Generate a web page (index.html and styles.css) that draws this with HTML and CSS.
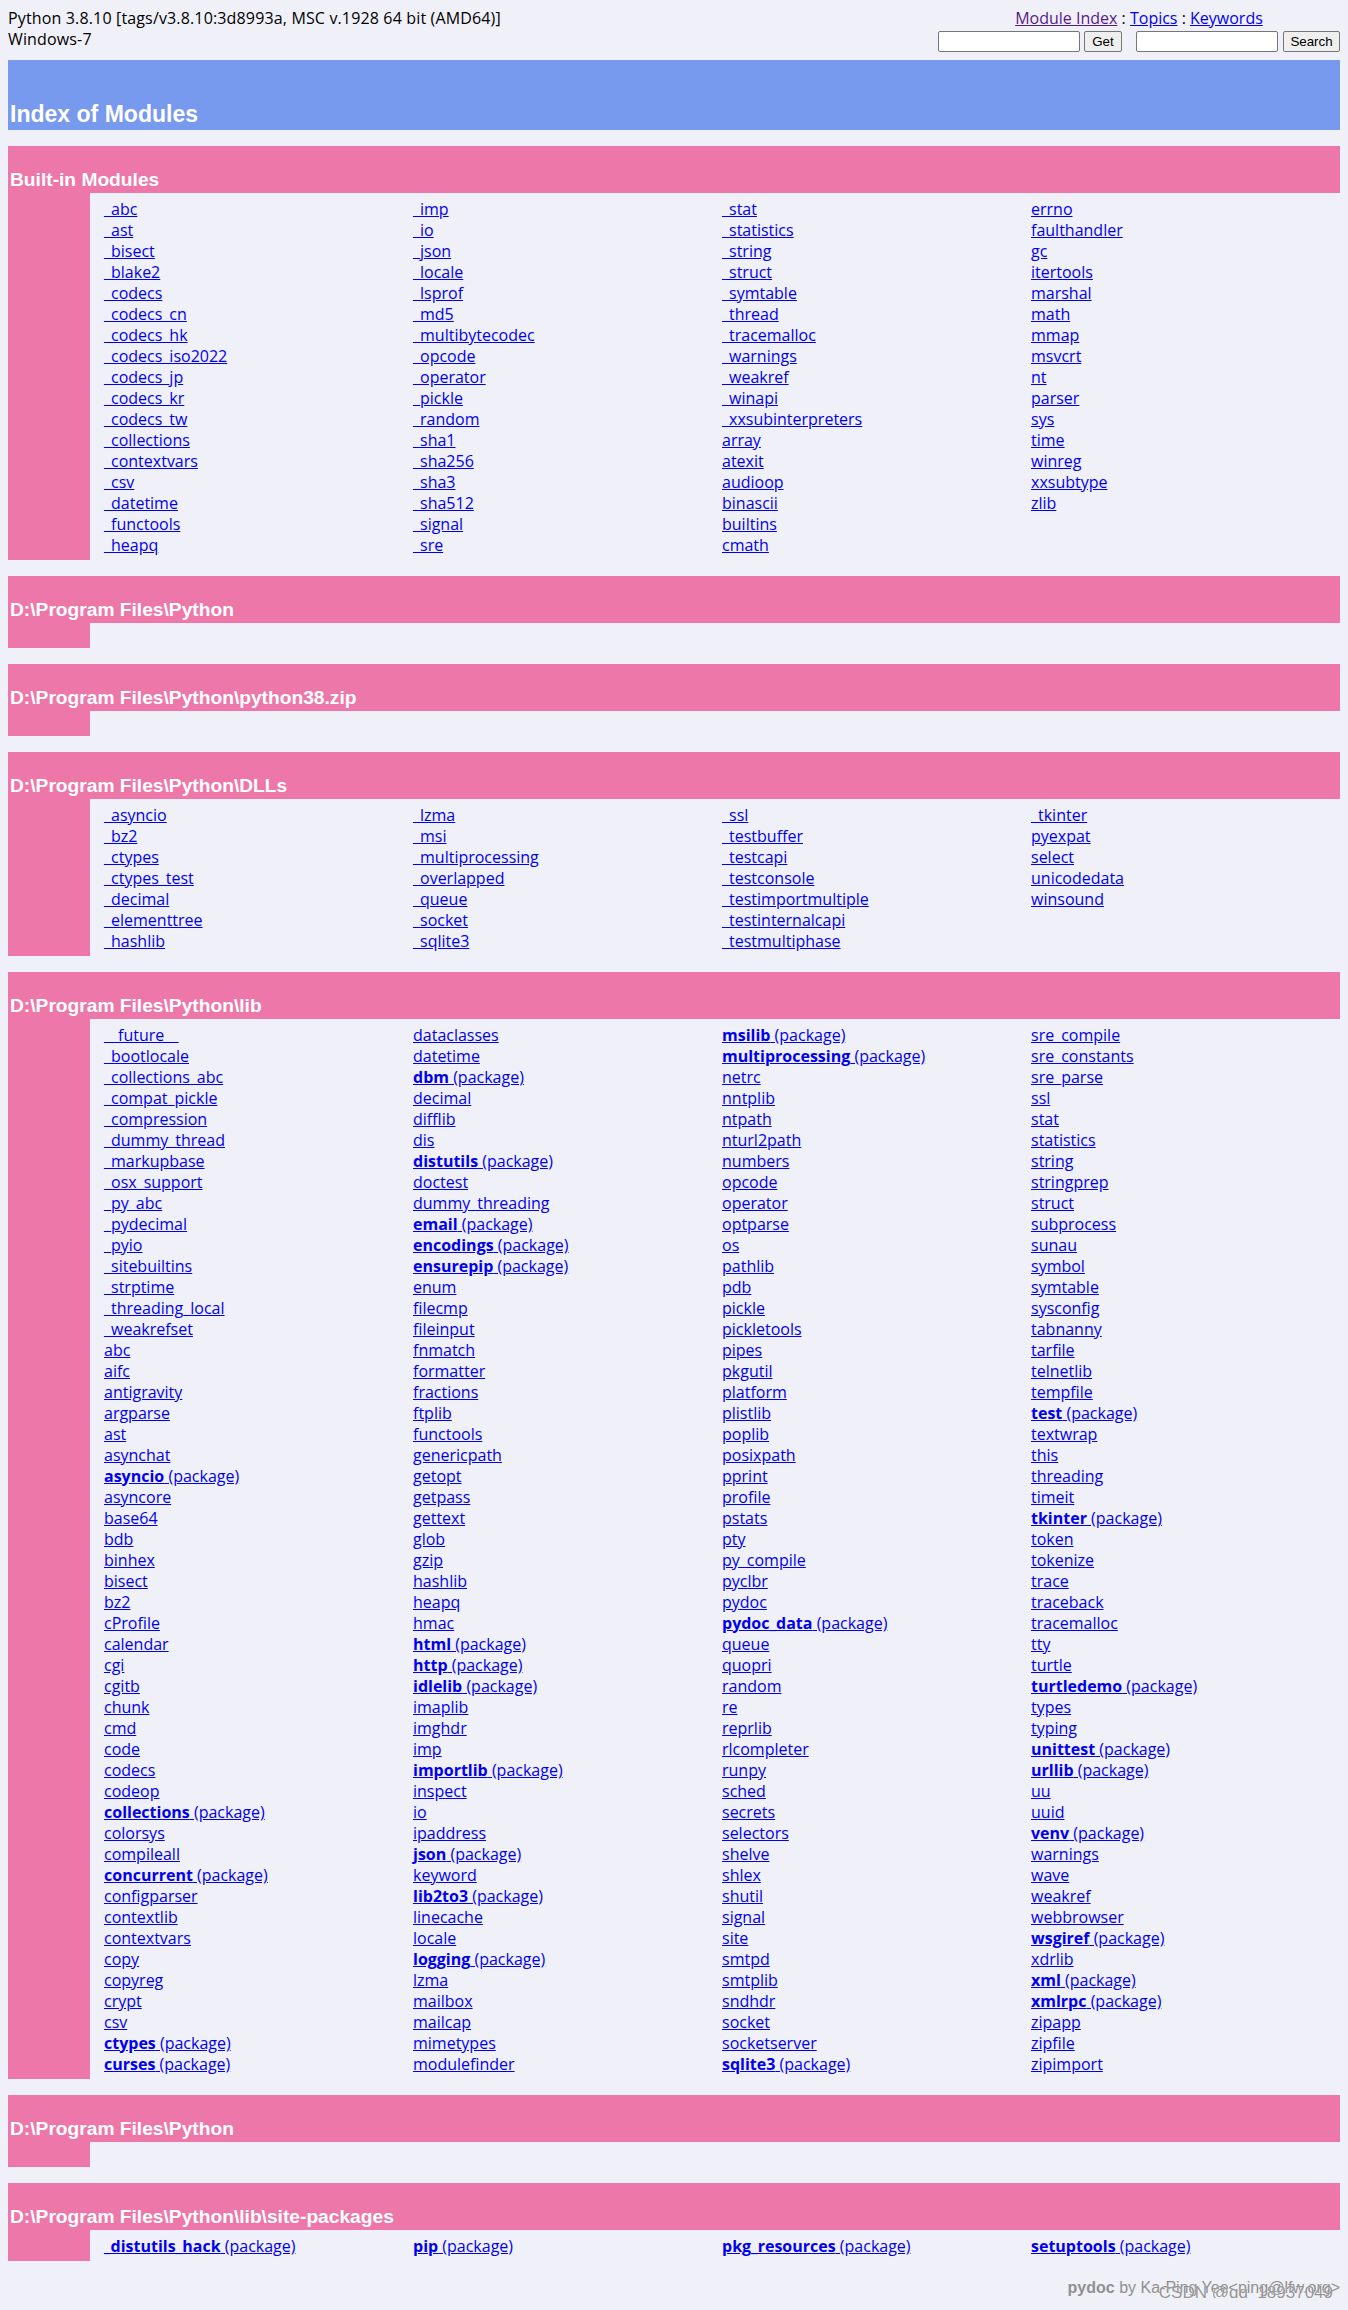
FILE: index.html
```html
<!DOCTYPE html>
<html>
<head>
<meta charset="utf-8">
<title>Pydoc: Index of Modules</title>
<link rel="stylesheet" href="styles.css">
</head>
<body>
<div class="topbar">
  <div class="version">Python 3.8.10 [tags/v3.8.10:3d8993a, MSC v.1928 64 bit (AMD64)]<br>Windows-7</div>
  <div class="nav">
    <div class="navlinks"><a class="visited" href="#">Module Index</a> : <a href="#">Topics</a> : <a href="#">Keywords</a></div>
    <div class="forms">
      <form class="f"><input class="key" type="text"><button class="btn get" type="button">Get</button></form>
      <form class="f f2"><input class="key" type="text"><button class="btn search" type="button">Search</button></form>
    </div>
  </div>
</div>

<div class="banner"><strong>Index of Modules</strong></div>

<div class="section">
  <div class="sec-head"><strong>Built-in Modules</strong></div>
  <div class="sec-body">
    <div class="gutter"></div>
    <div class="list">
      <div class="col">
        <a href="#">_abc</a><a href="#">_ast</a><a href="#">_bisect</a><a href="#">_blake2</a><a href="#">_codecs</a><a href="#">_codecs_cn</a><a href="#">_codecs_hk</a><a href="#">_codecs_iso2022</a><a href="#">_codecs_jp</a><a href="#">_codecs_kr</a><a href="#">_codecs_tw</a><a href="#">_collections</a><a href="#">_contextvars</a><a href="#">_csv</a><a href="#">_datetime</a><a href="#">_functools</a><a href="#">_heapq</a>
      </div>
      <div class="col">
        <a href="#">_imp</a><a href="#">_io</a><a href="#">_json</a><a href="#">_locale</a><a href="#">_lsprof</a><a href="#">_md5</a><a href="#">_multibytecodec</a><a href="#">_opcode</a><a href="#">_operator</a><a href="#">_pickle</a><a href="#">_random</a><a href="#">_sha1</a><a href="#">_sha256</a><a href="#">_sha3</a><a href="#">_sha512</a><a href="#">_signal</a><a href="#">_sre</a>
      </div>
      <div class="col">
        <a href="#">_stat</a><a href="#">_statistics</a><a href="#">_string</a><a href="#">_struct</a><a href="#">_symtable</a><a href="#">_thread</a><a href="#">_tracemalloc</a><a href="#">_warnings</a><a href="#">_weakref</a><a href="#">_winapi</a><a href="#">_xxsubinterpreters</a><a href="#">array</a><a href="#">atexit</a><a href="#">audioop</a><a href="#">binascii</a><a href="#">builtins</a><a href="#">cmath</a>
      </div>
      <div class="col">
        <a href="#">errno</a><a href="#">faulthandler</a><a href="#">gc</a><a href="#">itertools</a><a href="#">marshal</a><a href="#">math</a><a href="#">mmap</a><a href="#">msvcrt</a><a href="#">nt</a><a href="#">parser</a><a href="#">sys</a><a href="#">time</a><a href="#">winreg</a><a href="#">xxsubtype</a><a href="#">zlib</a>
      </div>
    </div>
  </div>
</div>

<div class="section">
  <div class="sec-head"><strong>D:\Program Files\Python</strong></div>
  <div class="sec-body empty"><div class="gutter"></div></div>
</div>

<div class="section">
  <div class="sec-head"><strong>D:\Program Files\Python\python38.zip</strong></div>
  <div class="sec-body empty"><div class="gutter"></div></div>
</div>

<div class="section">
  <div class="sec-head"><strong>D:\Program Files\Python\DLLs</strong></div>
  <div class="sec-body">
    <div class="gutter"></div>
    <div class="list">
      <div class="col">
        <a href="#">_asyncio</a><a href="#">_bz2</a><a href="#">_ctypes</a><a href="#">_ctypes_test</a><a href="#">_decimal</a><a href="#">_elementtree</a><a href="#">_hashlib</a>
      </div>
      <div class="col">
        <a href="#">_lzma</a><a href="#">_msi</a><a href="#">_multiprocessing</a><a href="#">_overlapped</a><a href="#">_queue</a><a href="#">_socket</a><a href="#">_sqlite3</a>
      </div>
      <div class="col">
        <a href="#">_ssl</a><a href="#">_testbuffer</a><a href="#">_testcapi</a><a href="#">_testconsole</a><a href="#">_testimportmultiple</a><a href="#">_testinternalcapi</a><a href="#">_testmultiphase</a>
      </div>
      <div class="col">
        <a href="#">_tkinter</a><a href="#">pyexpat</a><a href="#">select</a><a href="#">unicodedata</a><a href="#">winsound</a>
      </div>
    </div>
  </div>
</div>

<div class="section">
  <div class="sec-head"><strong>D:\Program Files\Python\lib</strong></div>
  <div class="sec-body">
    <div class="gutter"></div>
    <div class="list">
      <div class="col">
        <a href="#">__future__</a><a href="#">_bootlocale</a><a href="#">_collections_abc</a><a href="#">_compat_pickle</a><a href="#">_compression</a><a href="#">_dummy_thread</a><a href="#">_markupbase</a><a href="#">_osx_support</a><a href="#">_py_abc</a><a href="#">_pydecimal</a><a href="#">_pyio</a><a href="#">_sitebuiltins</a><a href="#">_strptime</a><a href="#">_threading_local</a><a href="#">_weakrefset</a><a href="#">abc</a><a href="#">aifc</a><a href="#">antigravity</a><a href="#">argparse</a><a href="#">ast</a><a href="#">asynchat</a><a href="#"><strong>asyncio</strong>&nbsp;(package)</a><a href="#">asyncore</a><a href="#">base64</a><a href="#">bdb</a><a href="#">binhex</a><a href="#">bisect</a><a href="#">bz2</a><a href="#">cProfile</a><a href="#">calendar</a><a href="#">cgi</a><a href="#">cgitb</a><a href="#">chunk</a><a href="#">cmd</a><a href="#">code</a><a href="#">codecs</a><a href="#">codeop</a><a href="#"><strong>collections</strong>&nbsp;(package)</a><a href="#">colorsys</a><a href="#">compileall</a><a href="#"><strong>concurrent</strong>&nbsp;(package)</a><a href="#">configparser</a><a href="#">contextlib</a><a href="#">contextvars</a><a href="#">copy</a><a href="#">copyreg</a><a href="#">crypt</a><a href="#">csv</a><a href="#"><strong>ctypes</strong>&nbsp;(package)</a><a href="#"><strong>curses</strong>&nbsp;(package)</a>
      </div>
      <div class="col">
        <a href="#">dataclasses</a><a href="#">datetime</a><a href="#"><strong>dbm</strong>&nbsp;(package)</a><a href="#">decimal</a><a href="#">difflib</a><a href="#">dis</a><a href="#"><strong>distutils</strong>&nbsp;(package)</a><a href="#">doctest</a><a href="#">dummy_threading</a><a href="#"><strong>email</strong>&nbsp;(package)</a><a href="#"><strong>encodings</strong>&nbsp;(package)</a><a href="#"><strong>ensurepip</strong>&nbsp;(package)</a><a href="#">enum</a><a href="#">filecmp</a><a href="#">fileinput</a><a href="#">fnmatch</a><a href="#">formatter</a><a href="#">fractions</a><a href="#">ftplib</a><a href="#">functools</a><a href="#">genericpath</a><a href="#">getopt</a><a href="#">getpass</a><a href="#">gettext</a><a href="#">glob</a><a href="#">gzip</a><a href="#">hashlib</a><a href="#">heapq</a><a href="#">hmac</a><a href="#"><strong>html</strong>&nbsp;(package)</a><a href="#"><strong>http</strong>&nbsp;(package)</a><a href="#"><strong>idlelib</strong>&nbsp;(package)</a><a href="#">imaplib</a><a href="#">imghdr</a><a href="#">imp</a><a href="#"><strong>importlib</strong>&nbsp;(package)</a><a href="#">inspect</a><a href="#">io</a><a href="#">ipaddress</a><a href="#"><strong>json</strong>&nbsp;(package)</a><a href="#">keyword</a><a href="#"><strong>lib2to3</strong>&nbsp;(package)</a><a href="#">linecache</a><a href="#">locale</a><a href="#"><strong>logging</strong>&nbsp;(package)</a><a href="#">lzma</a><a href="#">mailbox</a><a href="#">mailcap</a><a href="#">mimetypes</a><a href="#">modulefinder</a>
      </div>
      <div class="col">
        <a href="#"><strong>msilib</strong>&nbsp;(package)</a><a href="#"><strong>multiprocessing</strong>&nbsp;(package)</a><a href="#">netrc</a><a href="#">nntplib</a><a href="#">ntpath</a><a href="#">nturl2path</a><a href="#">numbers</a><a href="#">opcode</a><a href="#">operator</a><a href="#">optparse</a><a href="#">os</a><a href="#">pathlib</a><a href="#">pdb</a><a href="#">pickle</a><a href="#">pickletools</a><a href="#">pipes</a><a href="#">pkgutil</a><a href="#">platform</a><a href="#">plistlib</a><a href="#">poplib</a><a href="#">posixpath</a><a href="#">pprint</a><a href="#">profile</a><a href="#">pstats</a><a href="#">pty</a><a href="#">py_compile</a><a href="#">pyclbr</a><a href="#">pydoc</a><a href="#"><strong>pydoc_data</strong>&nbsp;(package)</a><a href="#">queue</a><a href="#">quopri</a><a href="#">random</a><a href="#">re</a><a href="#">reprlib</a><a href="#">rlcompleter</a><a href="#">runpy</a><a href="#">sched</a><a href="#">secrets</a><a href="#">selectors</a><a href="#">shelve</a><a href="#">shlex</a><a href="#">shutil</a><a href="#">signal</a><a href="#">site</a><a href="#">smtpd</a><a href="#">smtplib</a><a href="#">sndhdr</a><a href="#">socket</a><a href="#">socketserver</a><a href="#"><strong>sqlite3</strong>&nbsp;(package)</a>
      </div>
      <div class="col">
        <a href="#">sre_compile</a><a href="#">sre_constants</a><a href="#">sre_parse</a><a href="#">ssl</a><a href="#">stat</a><a href="#">statistics</a><a href="#">string</a><a href="#">stringprep</a><a href="#">struct</a><a href="#">subprocess</a><a href="#">sunau</a><a href="#">symbol</a><a href="#">symtable</a><a href="#">sysconfig</a><a href="#">tabnanny</a><a href="#">tarfile</a><a href="#">telnetlib</a><a href="#">tempfile</a><a href="#"><strong>test</strong>&nbsp;(package)</a><a href="#">textwrap</a><a href="#">this</a><a href="#">threading</a><a href="#">timeit</a><a href="#"><strong>tkinter</strong>&nbsp;(package)</a><a href="#">token</a><a href="#">tokenize</a><a href="#">trace</a><a href="#">traceback</a><a href="#">tracemalloc</a><a href="#">tty</a><a href="#">turtle</a><a href="#"><strong>turtledemo</strong>&nbsp;(package)</a><a href="#">types</a><a href="#">typing</a><a href="#"><strong>unittest</strong>&nbsp;(package)</a><a href="#"><strong>urllib</strong>&nbsp;(package)</a><a href="#">uu</a><a href="#">uuid</a><a href="#"><strong>venv</strong>&nbsp;(package)</a><a href="#">warnings</a><a href="#">wave</a><a href="#">weakref</a><a href="#">webbrowser</a><a href="#"><strong>wsgiref</strong>&nbsp;(package)</a><a href="#">xdrlib</a><a href="#"><strong>xml</strong>&nbsp;(package)</a><a href="#"><strong>xmlrpc</strong>&nbsp;(package)</a><a href="#">zipapp</a><a href="#">zipfile</a><a href="#">zipimport</a>
      </div>
    </div>
  </div>
</div>

<div class="section">
  <div class="sec-head"><strong>D:\Program Files\Python</strong></div>
  <div class="sec-body empty"><div class="gutter"></div></div>
</div>

<div class="section">
  <div class="sec-head"><strong>D:\Program Files\Python\lib\site-packages</strong></div>
  <div class="sec-body">
    <div class="gutter"></div>
    <div class="list">
      <div class="col"><a href="#"><strong>_distutils_hack</strong>&nbsp;(package)</a></div>
      <div class="col"><a href="#"><strong>pip</strong>&nbsp;(package)</a></div>
      <div class="col"><a href="#"><strong>pkg_resources</strong>&nbsp;(package)</a></div>
      <div class="col"><a href="#"><strong>setuptools</strong>&nbsp;(package)</a></div>
    </div>
  </div>
</div>

<div class="footer"><strong>pydoc</strong> by Ka-Ping Yee&lt;ping@lfw.org&gt;<span class="watermark">CSDN @qq_18937049</span></div>
</body>
</html>
```

FILE: styles.css
```css
* {
  box-sizing: border-box;
}

html {
  background: #f0f0f8;
}

body {
  margin: 8px;
  font-family: "Open Sans", "Noto Sans CJK SC", sans-serif;
  font-size: 16px;
  line-height: 21px;
  color: #000;
}

a {
  color: #0000ee;
  text-decoration: underline;
}

a.visited {
  color: #551a8b;
}

/* top bar */
.topbar {
  display: flex;
  justify-content: space-between;
  height: 52px;
}

.version {
  letter-spacing: 0.15px;
}

.nav {
  width: 402px;
}

.navlinks {
  text-align: center;
}

.forms {
  display: flex;
  margin-top: 2px;
}

.f {
  display: flex;
  margin: 0;
}

.f2 {
  margin-left: 14px;
}

.key {
  width: 142px;
  height: 21px;
  margin: 0;
  padding: 1px 2px;
  border: 1px solid #767676;
  border-radius: 2px;
  background: #fff;
  font: 13.33px "Liberation Sans", Arial, sans-serif;
}

.btn {
  height: 21px;
  margin: 0 0 0 4px;
  padding: 0;
  border: 1px solid #767676;
  border-radius: 2px;
  background: #efefef;
  color: #000;
  font: 13.33px "Liberation Sans", Arial, sans-serif;
}

.get {
  width: 38px;
}

.search {
  width: 57px;
  margin-left: 5px;
}

/* banner */
.banner {
  display: flex;
  align-items: flex-end;
  height: 70px;
  padding: 0 2px 3px;
  background: #7799ee;
  color: #fff;
  font: bold 23.04px/26px "Liberation Sans", Arial, sans-serif;
}

/* sections */
.section {
  margin-top: 16px;
}

.section + .section {
  margin-top: 16.3px;
}

.sec-head {
  display: flex;
  align-items: flex-end;
  height: 46.7px;
  padding: 0 2px 2px;
  background: #ee77aa;
  color: #fff;
  font: bold 19.2px/22px "Liberation Sans", Arial, sans-serif;
}

.sec-body {
  display: flex;
}

.sec-body.empty {
  height: 25px;
}

.gutter {
  flex: none;
  width: 82px;
  background: #ee77aa;
}

.list {
  flex: 1;
  display: grid;
  grid-template-columns: repeat(4, 1fr);
  padding: 6px 0 4px 14px;
}

.col {
  display: flex;
  flex-direction: column;
  align-items: flex-start;
  min-width: 0;
}

.col a {
  white-space: nowrap;
}

/* footer */
.footer {
  position: relative;
  margin-top: 16px;
  text-align: right;
  color: #909090;
  font: 16px/21px "Liberation Sans", Arial, sans-serif;
}

.watermark {
  position: absolute;
  top: 6px;
  right: 7px;
  color: rgba(130, 130, 130, 0.85);
  font: 17px/20px "Liberation Sans", Arial, sans-serif;
  text-shadow: 0 0 1px #fff;
  white-space: nowrap;
}
```
